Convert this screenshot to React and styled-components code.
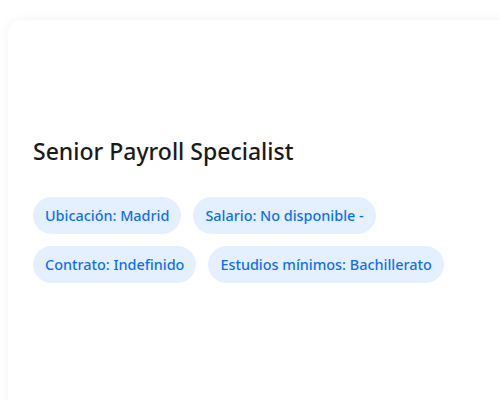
import React from "react";
import styled, { createGlobalStyle } from "styled-components";

const Global = createGlobalStyle`
  html, body { margin: 0; padding: 0; background: #ffffff; overflow: hidden; }
  body { font-family: "Noto Sans", "Open Sans", sans-serif; }
`;

const Page = styled.div`
  padding: 20px 0 0 8px;
  width: 500px;
  height: 400px;
  box-sizing: border-box;
  overflow: hidden;
`;

const Card = styled.div`
  width: 540px;
  height: 460px;
  background: #ffffff;
  border-radius: 14px;
  box-shadow: 0 0 12px rgba(0, 0, 0, 0.05);
  padding: 115px 25px 24px;
  box-sizing: border-box;
`;

const Title = styled.h1`
  margin: 0 0 30px;
  font-size: 23px;
  line-height: 32px;
  font-weight: 500;
  color: #1a1a1a;
`;

const Tags = styled.div`
  display: flex;
  flex-wrap: wrap;
  gap: 12px 12px;
  max-width: 420px;
`;

const Tag = styled.span`
  display: inline-flex;
  align-items: center;
  height: 37px;
  padding: 0 12px;
  border-radius: 18.5px;
  background: #e5f0fe;
  color: #0d6ff5;
  font-size: 14.4px;
  font-weight: 500;
  box-sizing: border-box;
`;

const tags = [
  "Ubicación: Madrid",
  "Salario: No disponible -",
  "Contrato: Indefinido",
  "Estudios mínimos: Bachillerato",
];

export default function App() {
  return (
    <>
      <Global />
      <Page>
        <Card>
          <Title>Senior Payroll Specialist</Title>
          <Tags>
            {tags.map((t) => (
              <Tag key={t}>{t}</Tag>
            ))}
          </Tags>
        </Card>
      </Page>
    </>
  );
}
